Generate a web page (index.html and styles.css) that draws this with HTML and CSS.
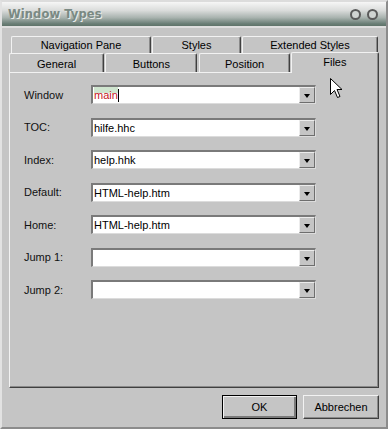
FILE: index.html
```html
<!DOCTYPE html>
<html lang="de">
<head>
    <meta charset="UTF-8">
    <meta name="viewport" content="width=device-width, initial-scale=1.0">
    <title>Window Types</title>
    <link rel="stylesheet" href="styles.css">
</head>
<body>

    <div class="window">
        <div class="titlebar">
            <span class="title">Window Types</span>
            <span class="ctl"></span>
            <span class="ctl"></span>
        </div>

        <div class="content">
            <div class="tabs">
                <div class="tabrow back">
                    <div class="tab nav">Navigation Pane</div>
                    <div class="tab styles">Styles</div>
                    <div class="tab ext">Extended Styles</div>
                </div>
                <div class="tabrow front">
                    <div class="tab general">General</div>
                    <div class="tab buttons">Buttons</div>
                    <div class="tab position">Position</div>
                    <div class="tab files active">Files</div>
                </div>
            </div>

            <div class="panel">
                <div class="field">
                    <span class="label">Window</span>
                    <div class="combo">
                        <span class="value edit"><span class="sel">main</span><span class="caret"></span></span>
                        <span class="drop"></span>
                    </div>
                </div>
                <div class="field">
                    <span class="label">TOC:</span>
                    <div class="combo">
                        <span class="value">hilfe.hhc</span>
                        <span class="drop"></span>
                    </div>
                </div>
                <div class="field">
                    <span class="label">Index:</span>
                    <div class="combo">
                        <span class="value">help.hhk</span>
                        <span class="drop"></span>
                    </div>
                </div>
                <div class="field">
                    <span class="label">Default:</span>
                    <div class="combo">
                        <span class="value">HTML-help.htm</span>
                        <span class="drop"></span>
                    </div>
                </div>
                <div class="field">
                    <span class="label">Home:</span>
                    <div class="combo">
                        <span class="value">HTML-help.htm</span>
                        <span class="drop"></span>
                    </div>
                </div>
                <div class="field">
                    <span class="label">Jump 1:</span>
                    <div class="combo">
                        <span class="value"></span>
                        <span class="drop"></span>
                    </div>
                </div>
                <div class="field">
                    <span class="label">Jump 2:</span>
                    <div class="combo">
                        <span class="value"></span>
                        <span class="drop"></span>
                    </div>
                </div>
            </div>

            <div class="actions">
                <button class="btn default">OK</button>
                <button class="btn">Abbrechen</button>
            </div>
        </div>

        <!-- mouse pointer over the dialog -->
        <svg class="cursor" width="13" height="21" viewBox="0 0 13 21">
            <path d="M0.5 0.5 L0.5 16.5 L4.5 12.5 L7.5 19.5 L10 18.5 L7 11.5 L12 11.5 Z" fill="#fff" stroke="#000" stroke-width="1"/>
        </svg>
    </div>

</body>
</html>
```

FILE: styles.css
```css
* {
    box-sizing: border-box;
}

body {
    margin: 0;
    font-family: "Liberation Sans", Arial, sans-serif;
    font-size: 11px;
    color: #000;
    overflow: hidden;
}

.window {
    position: relative;
    width: 388px;
    height: 429px;
    background: #c5c5c5;
    border-top: 2px solid #dcdcdc;
    border-left: 2px solid #e2e2e2;
    border-right: 2px solid #8c8c8c;
    border-bottom: 2px solid #8c8c8c;
}

/* Title bar */
.titlebar {
    height: 26px;
    display: flex;
    align-items: center;
    padding: 0 8px 0 6px;
    background: linear-gradient(#f6f6f6 0%, #dadcdb 35%, #a9b3af 65%, #6b7f77 90%, #5e7369 100%);
    border-bottom: 2px solid #dedede;
}

.title {
    flex: 1;
    font-family: "DejaVu Sans", Verdana, sans-serif;
    font-weight: bold;
    font-size: 11.5px;
    color: #7a8983;
    text-shadow: 1px 1px 0 #e8ecea;
    letter-spacing: 0.1px;
}

.ctl {
    width: 11px;
    height: 11px;
    margin-left: 6px;
    border-radius: 50%;
    border: 2.5px solid #5a5a5a;
    background: #d0d4d2;
}

/* Tabs */
.content {
    padding: 8px 7px 0 7px;
}

.tabrow {
    display: flex;
    gap: 1px;
}

.tabrow.back {
    margin-left: 2px;
    height: 17px;
}

.tabrow.front {
    height: 19px;
}

.tab {
    display: flex;
    justify-content: center;
    align-items: center;
    background: #c5c5c5;
    border-top: 1px solid #f2f2f2;
    border-left: 1px solid #f2f2f2;
    border-right: 1px solid #404040;
    box-shadow: inset -1px 0 0 #8a8a8a;
    border-radius: 2px 2px 0 0;
}

.tab.nav { width: 140px; }
.tab.styles { width: 89px; }
.tab.ext { width: 136px; }

.tab.general { width: 96px; padding-top: 2px; }
.tab.buttons { width: 93px; padding-top: 2px; }
.tab.position { width: 91px; padding-top: 2px; margin-left: 1px; }

.tab.files {
    position: relative;
    z-index: 1;
    width: 89px;
    height: 21px;
    margin-top: -1px;
    padding-bottom: 2px;
}

/* Page of the Files tab */
.panel {
    width: 370px;
    height: 316px;
    padding: 12px 0 0 14px;
    border-top: 1px solid #f2f2f2;
    border-left: 1px solid #f2f2f2;
    border-right: 1px solid #404040;
    border-bottom: 1px solid #404040;
    box-shadow: inset -1px -1px 0 #8a8a8a;
    display: flex;
    flex-direction: column;
    gap: 13.5px;
}

.field {
    display: flex;
    align-items: center;
    height: 19px;
}

.label {
    width: 67px;
    color: #111;
}

.combo {
    width: 225px;
    height: 19px;
    display: flex;
    align-items: center;
    background: #fff;
    border-top: 2px solid #7a7a7a;
    border-left: 2px solid #7a7a7a;
    border-right: 1px solid #dcdcdc;
    border-bottom: 1px solid #dcdcdc;
}

.value {
    flex: 1;
    padding-left: 1px;
    font-size: 11px;
    line-height: 16px;
}

.edit {
    display: flex;
    align-items: center;
}

.sel {
    color: #c4141c;
    background: linear-gradient(#cfe5cf 0 35%, #fff 35%);
}

.caret {
    width: 1px;
    height: 13px;
    background: #000;
}

.drop {
    position: relative;
    width: 16px;
    height: 16px;
    background: #c5c5c5;
    border-top: 1px solid #ececec;
    border-left: 1px solid #ececec;
    border-right: 1px solid #6e6e6e;
    border-bottom: 1px solid #6e6e6e;
}

.drop:after {
    content: "";
    position: absolute;
    left: 4px;
    top: 6px;
    border-left: 3.5px solid transparent;
    border-right: 3.5px solid transparent;
    border-top: 4px solid #000;
}

/* Bottom buttons */
.actions {
    display: flex;
    justify-content: flex-end;
    gap: 6px;
    margin-top: 7px;
}

.btn {
    width: 76px;
    height: 24px;
    font-family: "Liberation Sans", Arial, sans-serif;
    font-size: 11px;
    color: #000;
    background: #c5c5c5;
    border-top: 1px solid #f2f2f2;
    border-left: 1px solid #f2f2f2;
    border-right: 1px solid #404040;
    border-bottom: 1px solid #404040;
    box-shadow: inset -1px -1px 0 #8a8a8a;
    padding: 0;
}

.btn.default {
    width: 75px;
    border: 1px solid #000;
    box-shadow: inset 1px 1px 0 #f2f2f2, inset -2px -2px 0 #7a7a7a;
}

.cursor {
    position: absolute;
    left: 328px;
    top: 76px;
}
```
